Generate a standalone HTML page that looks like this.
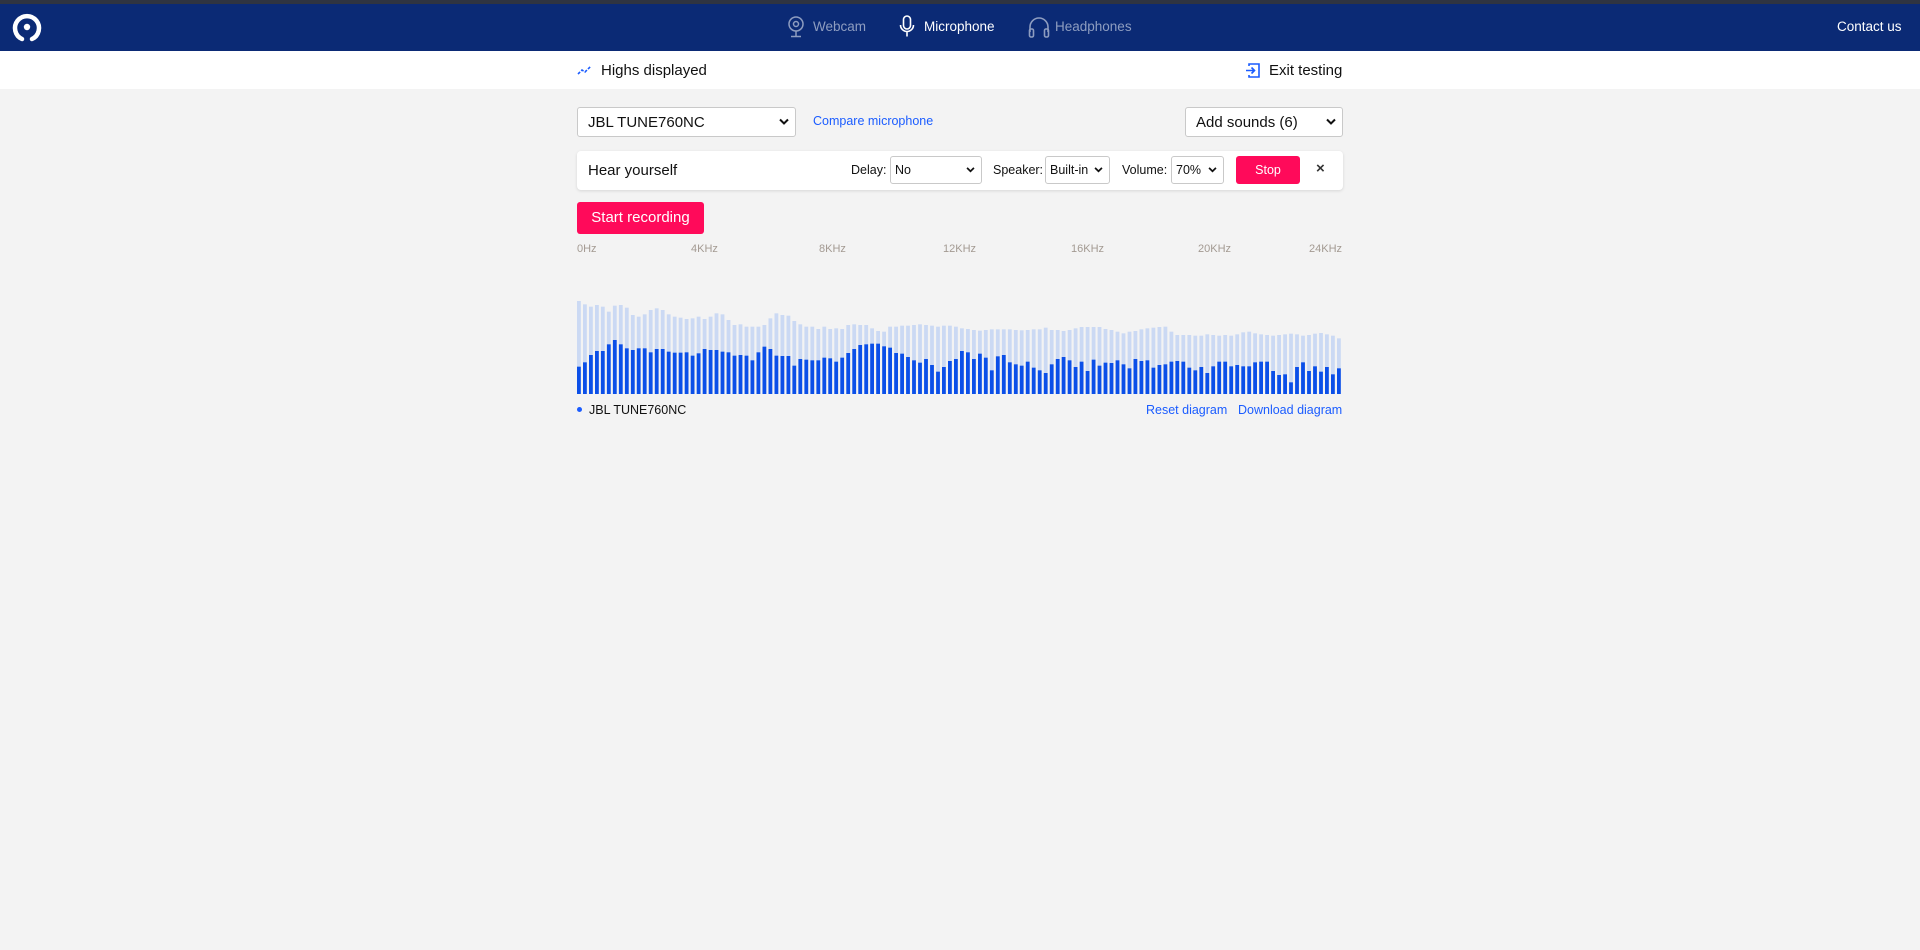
<!DOCTYPE html>
<html><head><meta charset="utf-8"><style>
*{box-sizing:border-box;margin:0;padding:0}
body{width:1920px;height:950px;background:#f3f3f3;font-family:"Liberation Sans",sans-serif;position:relative;overflow:hidden;color:#111}
.a{position:absolute;white-space:nowrap}
.sel{position:absolute;background:#fff;border:1px solid #c9c9c9;border-radius:3px;color:#111}
.sel svg{position:absolute;right:6px;top:50%;transform:translateY(-50%)}
.lbl{font-size:11px;color:#a39a92;top:243px}
a{color:#1a5cff;text-decoration:none}
</style></head><body>
<div class="a" style="left:0;top:0;width:1920px;height:4px;background:#2f3441"></div>
<div class="a" style="left:0;top:4px;width:1920px;height:47px;background:#0b2a75"></div>
<svg class="a" style="left:11px;top:11px" width="32" height="32" viewBox="0 0 32 32"><path d="M11 28 A12 12 0 1 1 21 28" fill="none" stroke="#fff" stroke-width="4.5" stroke-linecap="round"/><circle cx="16" cy="16" r="3.2" fill="#fff"/></svg>
<svg class="a" style="left:787px;top:16px" width="18" height="22" viewBox="0 0 18 22" fill="none" stroke="#8e9dc0" stroke-width="1.5"><circle cx="9" cy="8" r="7"/><circle cx="9" cy="8" r="2.5"/><path d="M9 15v5M4 20.5h10"/></svg>
<div class="a" style="left:813px;top:19px;font-size:13.5px;color:#8e9dc0">Webcam</div>
<svg class="a" style="left:899px;top:15px" width="16" height="23" viewBox="0 0 16 23" fill="none" stroke="#fff" stroke-width="1.6"><rect x="4.5" y="1" width="7" height="13" rx="3.5"/><path d="M1.5 10a6.5 6.5 0 0 0 13 0M8 16.5v5"/></svg>
<div class="a" style="left:924px;top:19px;font-size:13.5px;color:#fff">Microphone</div>
<svg class="a" style="left:1028px;top:16px" width="22" height="22" viewBox="0 0 22 22" fill="none" stroke="#8e9dc0" stroke-width="1.6"><path d="M2 16v-5a9 9 0 0 1 18 0v5"/><rect x="1.5" y="13" width="4" height="8" rx="1.5"/><rect x="16.5" y="13" width="4" height="8" rx="1.5"/></svg>
<div class="a" style="left:1055px;top:19px;font-size:13.5px;color:#8e9dc0">Headphones</div>
<div class="a" style="left:1837px;top:19px;font-size:13.5px;color:#fff">Contact us</div>
<div class="a" style="left:0;top:51px;width:1920px;height:38px;background:#fff"></div>
<svg class="a" style="left:577px;top:64px" width="16" height="12" viewBox="0 0 16 12" fill="none" stroke="#1a5cff" stroke-width="1.6"><path d="M1 10l4-4 3 2 6-6" stroke-dasharray="3 1.5"/></svg>
<div class="a" style="left:601px;top:62px;font-size:15px">Highs displayed</div>
<svg class="a" style="left:1245px;top:62px" width="16" height="17" viewBox="0 0 16 17" fill="none" stroke="#1a5cff" stroke-width="1.6"><path d="M4 4V2h10v13H4v-2M1 8.5h8M6.5 5.5l3 3-3 3"/></svg>
<div class="a" style="left:1269px;top:62px;font-size:15px">Exit testing</div>
<div class="sel" style="left:577px;top:107px;width:219px;height:30px"><span class="a" style="left:10px;top:6px;font-size:15px">JBL TUNE760NC</span><svg width="10" height="7" viewBox="0 0 10 7"><path d="M1 1l4 4 4-4" stroke="#111" stroke-width="2" fill="none"/></svg></div>
<div class="a" style="left:813px;top:114px;font-size:12.5px"><a>Compare microphone</a></div>
<div class="sel" style="left:1185px;top:107px;width:158px;height:30px"><span class="a" style="left:10px;top:6px;font-size:15px">Add sounds (6)</span><svg width="10" height="7" viewBox="0 0 10 7"><path d="M1 1l4 4 4-4" stroke="#111" stroke-width="2" fill="none"/></svg></div>
<div class="a" style="left:577px;top:151px;width:766px;height:39px;background:#fff;border-radius:4px;box-shadow:0 1px 3px rgba(0,0,0,.12)"></div>
<div class="a" style="left:588px;top:162px;font-size:15px">Hear yourself</div>
<div class="a" style="left:851px;top:163px;font-size:12.5px">Delay:</div>
<div class="sel" style="left:890px;top:156px;width:92px;height:28px"><span class="a" style="left:4px;top:6px;font-size:12.5px">No</span><svg width="9" height="6" viewBox="0 0 10 7"><path d="M1 1l4 4 4-4" stroke="#111" stroke-width="2" fill="none"/></svg></div>
<div class="a" style="left:993px;top:163px;font-size:12.5px">Speaker:</div>
<div class="sel" style="left:1045px;top:156px;width:65px;height:28px"><span class="a" style="left:4px;top:6px;font-size:12.5px">Built-in</span><svg width="9" height="6" viewBox="0 0 10 7"><path d="M1 1l4 4 4-4" stroke="#111" stroke-width="2" fill="none"/></svg></div>
<div class="a" style="left:1122px;top:163px;font-size:12.5px">Volume:</div>
<div class="sel" style="left:1171px;top:156px;width:53px;height:28px"><span class="a" style="left:4px;top:6px;font-size:12.5px">70%</span><svg width="9" height="6" viewBox="0 0 10 7"><path d="M1 1l4 4 4-4" stroke="#111" stroke-width="2" fill="none"/></svg></div>
<div class="a" style="left:1236px;top:156px;width:64px;height:28px;background:#ff0a5a;border-radius:3px;color:#fff;font-size:12.5px;text-align:center;line-height:28px">Stop</div>
<div class="a" style="left:1316px;top:160px;font-size:15px;font-weight:bold;color:#333">×</div>
<div class="a" style="left:577px;top:202px;width:127px;height:32px;background:#ff0a5a;border-radius:3px;color:#fff;font-size:15px;text-align:center;line-height:32px">Start recording</div>
<div class="a lbl" style="left:577px">0Hz</div>
<div class="a lbl" style="left:691px">4KHz</div>
<div class="a lbl" style="left:819px">8KHz</div>
<div class="a lbl" style="left:943px">12KHz</div>
<div class="a lbl" style="left:1071px">16KHz</div>
<div class="a lbl" style="left:1198px">20KHz</div>
<div class="a lbl" style="left:1309px">24KHz</div>
<svg id="ch" class="a" style="left:577px;top:290px" width="766" height="105"></svg>
<div class="a" style="left:577px;top:407px;width:5px;height:5px;border-radius:50%;background:#1a5cff"></div>
<div class="a" style="left:589px;top:403px;font-size:12.5px">JBL TUNE760NC</div>
<div class="a" style="left:1146px;top:403px;font-size:12.5px"><a>Reset diagram</a></div>
<div class="a" style="left:1238px;top:403px;font-size:12.5px"><a>Download diagram</a></div>
<script>
var L=[198,208,215,210,215,230,212,210,218,240,245,238,225,220,225,238,245,248,252,250,245,252,245,235,238,255,270,268,275,275,275,270,250,235,240,242,258,268,275,275,282,275,282,280,282,270,268,270,270,280,288,290,275,275,272,272,270,268,270,272,275,272,272,275,280,282,285,287,285,283,283,283,283,285,286,285,283,283,278,285,285,288,285,280,276,276,276,276,282,285,290,295,290,288,283,280,278,276,275,290,300,300,300,302,302,298,300,302,300,302,298,292,290,295,298,300,302,300,298,296,298,302,300,296,294,298,302,310];
var D=[395,382,360,348,348,328,315,328,340,345,340,340,352,342,342,350,353,353,352,362,355,342,345,345,350,352,362,360,362,376,352,335,342,362,363,363,392,372,374,376,376,368,370,380,368,354,342,330,328,326,326,334,338,354,356,366,376,383,372,390,410,396,378,372,348,352,372,356,368,406,364,360,382,388,392,380,398,406,414,388,372,366,376,396,380,408,374,392,383,384,376,388,400,372,378,376,398,390,388,380,378,380,398,406,396,414,394,380,380,394,390,394,394,382,380,380,408,420,418,442,396,382,408,394,410,396,418,400];
var s='',n=128,w=766/n;
for(var i=0;i<n;i++){var x=(i*w).toFixed(1);var lt=235+L[i%L.length]/3-290,dt=235+D[i%D.length]/3-290;
s+='<rect x="'+x+'" y="'+lt+'" width="3.8" height="'+(104-lt)+'" fill="#cbd9f3"/><rect x="'+x+'" y="'+dt+'" width="3.8" height="'+(104-dt)+'" fill="#0b4fe8"/>';}
document.getElementById('ch').innerHTML=s;
</script>
</body></html>
